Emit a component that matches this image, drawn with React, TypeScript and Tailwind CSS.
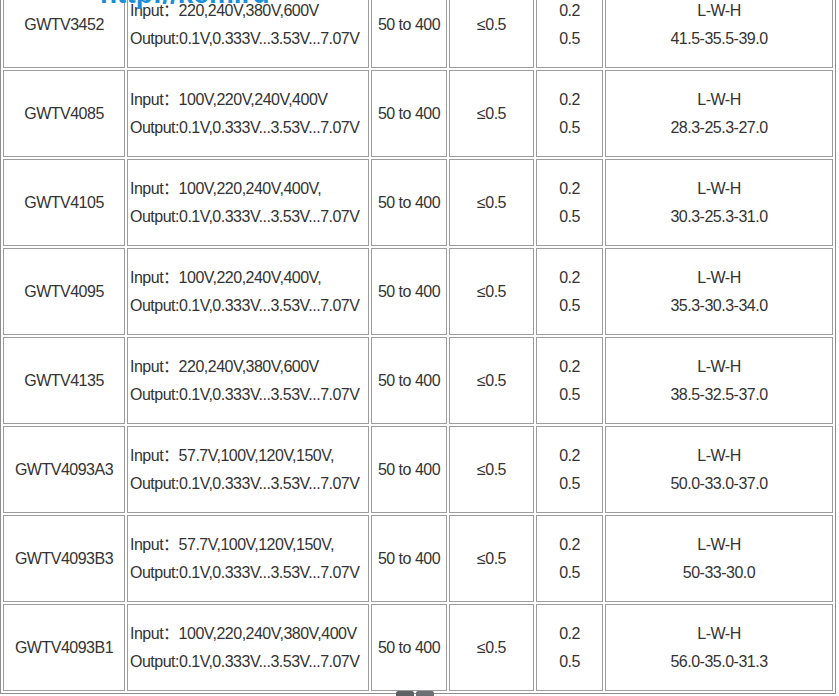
import React from "react";

type Row = { model: string; input: string; dims: string };

const rows: Row[] = [
  { model: "GWTV3452", input: "Input：220,240V,380V,600V", dims: "41.5-35.5-39.0" },
  { model: "GWTV4085", input: "Input：100V,220V,240V,400V", dims: "28.3-25.3-27.0" },
  { model: "GWTV4105", input: "Input：100V,220,240V,400V,", dims: "30.3-25.3-31.0" },
  { model: "GWTV4095", input: "Input：100V,220,240V,400V,", dims: "35.3-30.3-34.0" },
  { model: "GWTV4135", input: "Input：220,240V,380V,600V", dims: "38.5-32.5-37.0" },
  { model: "GWTV4093A3", input: "Input：57.7V,100V,120V,150V,", dims: "50.0-33.0-37.0" },
  { model: "GWTV4093B3", input: "Input：57.7V,100V,120V,150V,", dims: "50-33-30.0" },
  { model: "GWTV4093B1", input: "Input：100V,220,240V,380V,400V", dims: "56.0-35.0-31.3" },
];

const cell = "border border-[#9c9c9c] h-[87px] p-0 align-middle";

export default function App() {
  return (
    <div
      className="relative w-[839px] h-[696px] overflow-hidden bg-white text-[#333333] text-[16px] leading-[28px] tracking-[-0.5px]"
      style={{ fontFamily: '"Liberation Sans", Arial, "Noto Sans CJK SC", sans-serif' }}
    >
      <table className="-mt-[22px] w-[836px] table-fixed border-separate border-spacing-[2px] border border-[#8e8e8e]">
        <colgroup>
          <col className="w-[122px]" />
          <col className="w-[242px]" />
          <col className="w-[76px]" />
          <col className="w-[85px]" />
          <col className="w-[67px]" />
          <col className="w-[228px]" />
        </colgroup>
        <tbody>
          {rows.map((r) => (
            <tr key={r.model}>
              <td className={`${cell} text-center`}>{r.model}</td>
              <td className={`${cell} text-left pl-[2px] whitespace-nowrap`}>
                <div>{r.input}</div>
                <div>Output:0.1V,0.333V...3.53V...7.07V</div>
              </td>
              <td className={`${cell} text-center whitespace-nowrap`}>50 to 400</td>
              <td className={`${cell} text-center`}>≤0.5</td>
              <td className={`${cell} text-center`}>
                <div>0.2</div>
                <div>0.5</div>
              </td>
              <td className={`${cell} text-center`}>
                <div>L-W-H</div>
                <div>{r.dims}</div>
              </td>
            </tr>
          ))}
        </tbody>
      </table>

      <div
        className="absolute left-[100px] top-[-20px] text-[28px] font-bold tracking-normal leading-none text-[#1a8fd8]"
        style={{ fontFamily: '"Liberation Sans", Arial, sans-serif' }}
      >
        http://kem.ru
      </div>

      <div className="absolute left-[396px] top-[691px] flex gap-[2px]">
        <div className="w-[18px] h-[8px] bg-[#5f6265] rounded-t-[2px]" />
        <div className="w-[18px] h-[8px] bg-[#6d7073] rounded-t-[2px]" />
      </div>
    </div>
  );
}
